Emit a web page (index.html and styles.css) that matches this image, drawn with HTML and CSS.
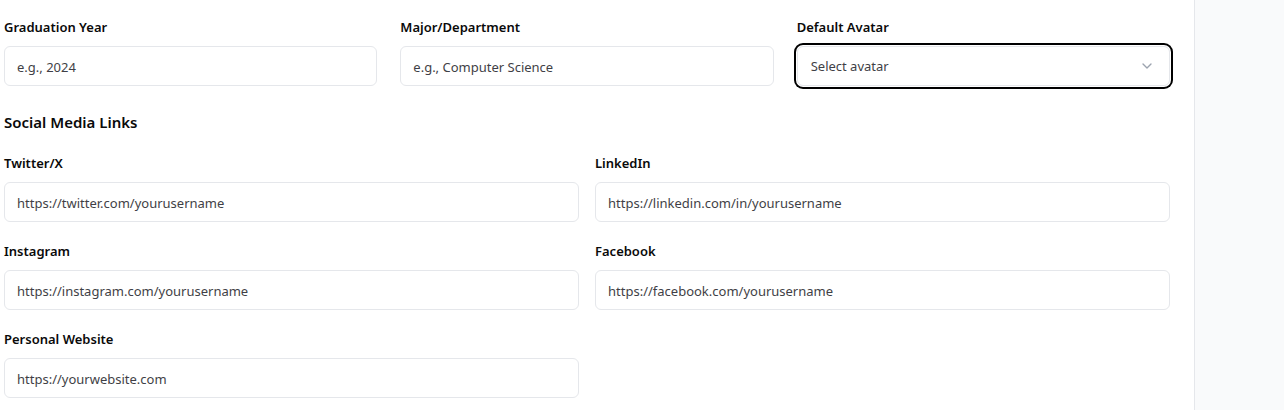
FILE: index.html
```html
<!DOCTYPE html>
<html lang="en">
<head>
<meta charset="utf-8">
<title>Profile form</title>
<link rel="stylesheet" href="styles.css">
</head>
<body>
<div class="page">
  <main class="content">
    <div class="grid3">
      <div class="field">
        <label class="label">Graduation Year</label>
        <input class="input" type="text" placeholder="e.g., 2024">
      </div>
      <div class="field">
        <label class="label">Major/Department</label>
        <input class="input" type="text" placeholder="e.g., Computer Science">
      </div>
      <div class="field">
        <label class="label">Default Avatar</label>
        <div class="select focused">
          <span>Select avatar</span>
          <svg class="chev" width="16" height="16" viewBox="0 0 24 24" fill="none" stroke="currentColor" stroke-width="2" stroke-linecap="round" stroke-linejoin="round"><path d="m6 9 6 6 6-6"/></svg>
        </div>
      </div>
    </div>

    <h3 class="section-title">Social Media Links</h3>

    <div class="grid2">
      <div class="field">
        <label class="label">Twitter/X</label>
        <input class="input" type="text" placeholder="https://twitter.com/yourusername">
      </div>
      <div class="field">
        <label class="label">LinkedIn</label>
        <input class="input" type="text" placeholder="https://linkedin.com/in/yourusername">
      </div>
      <div class="field">
        <label class="label">Instagram</label>
        <input class="input" type="text" placeholder="https://instagram.com/yourusername">
      </div>
      <div class="field">
        <label class="label">Facebook</label>
        <input class="input" type="text" placeholder="https://facebook.com/yourusername">
      </div>
      <div class="field">
        <label class="label">Personal Website</label>
        <input class="input" type="text" placeholder="https://yourwebsite.com">
      </div>
    </div>
  </main>
  <aside class="side"></aside>
</div>
</body>
</html>
```
FILE: styles.css
```css
* { box-sizing: border-box; }
html, body { margin: 0; padding: 0; background: #fff; }
body {
  font-family: "Noto Sans", "Open Sans", sans-serif;
  color: #0a0a0a;
  height: 410px;
  overflow: hidden;
}
.page {
  display: flex;
  height: 410px;
}
.content {
  width: 1194px;
  flex: none;
  padding: 17px 24px 0 4px;
}
.side {
  flex: 1;
  background: #f9fafb;
  border-left: 1px solid #e5e7eb;
}
.grid3 {
  display: grid;
  grid-template-columns: repeat(3, 1fr);
  column-gap: 23px;
}
.grid2 {
  display: grid;
  grid-template-columns: repeat(2, 1fr);
  column-gap: 16px;
  row-gap: 19px;
}
.field {
  display: flex;
  flex-direction: column;
  gap: 9px;
}
.label {
  font-size: 13px;
  font-weight: 600;
  line-height: 20px;
  color: #0a0a0a;
}
.input, .select {
  height: 40px;
  width: 100%;
  border: 1px solid #e5e7eb;
  border-radius: 6px;
  padding: 1px 12px 0;
  font-family: inherit;
  font-size: 13px;
  color: #0a0a0a;
  background: #fff;
  outline: none;
}
.input::placeholder { color: #3f3f46; opacity: 1; }
.select {
  display: flex;
  align-items: center;
  justify-content: space-between;
  color: #3f3f46;
  padding: 0 14px 0 13px;
}
.select.focused {
  box-shadow: 0 0 0 1px #fff, 0 0 0 3px #000;
}
.chev { color: #9ca3af; }
.section-title {
  margin: 0;
  padding: 24px 0 19px;
  font-size: 15px;
  font-weight: 600;
  line-height: 24px;
  color: #0a0a0a;
}
```
